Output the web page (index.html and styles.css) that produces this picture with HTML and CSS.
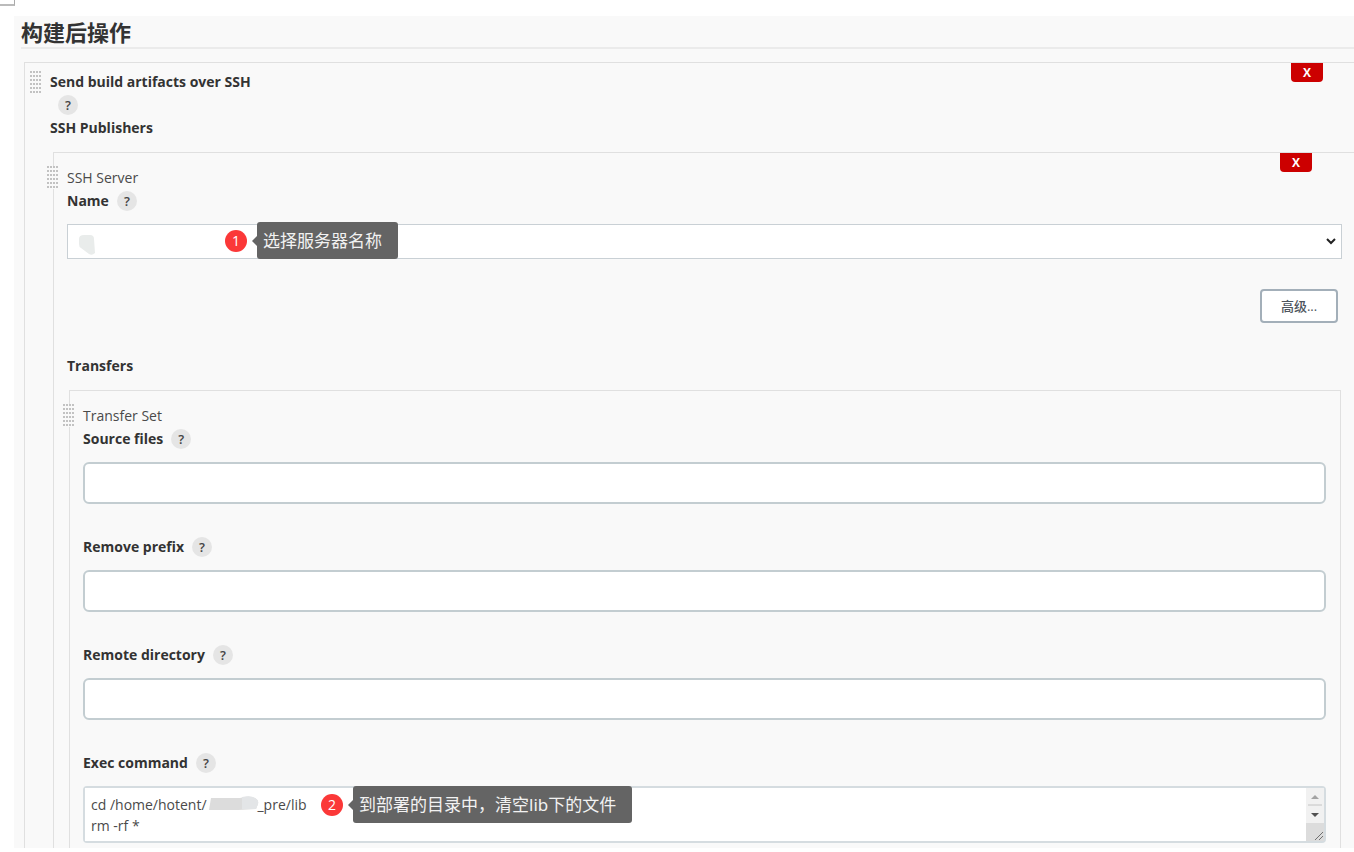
FILE: index.html
```html
<!DOCTYPE html>
<html lang="zh-CN">
<head>
<meta charset="utf-8">
<title>构建后操作</title>
<link rel="stylesheet" href="styles.css">
</head>
<body>
<div class="page-corner"></div>
<main class="config">
  <h1 class="section-title">构建后操作</h1>

  <section class="chunk chunk-publisher">
    <span class="handle"></span>
    <button class="delete" type="button">X</button>
    <div class="row strong">Send build artifacts over SSH</div>
    <div class="row row-help"><button class="help" type="button">?</button></div>
    <div class="row strong">SSH Publishers</div>

    <section class="chunk chunk-server">
      <span class="handle"></span>
      <button class="delete" type="button">X</button>
      <div class="row">SSH Server</div>
      <div class="row strong"><label for="server">Name</label><button class="help" type="button">?</button></div>
      <div class="field field-select">
        <select class="select" id="server"><option></option></select>
        <svg class="chevron" width="10" height="8" viewBox="0 0 10 8"><path d="M1 2l4 4 4-4" fill="none" stroke="#222" stroke-width="2"/></svg>
        <svg class="smudge" width="18" height="22" viewBox="0 0 18 22"><path d="M1 5Q1 1 6 1h6q4 0 4 4l1 14q-3 3-6 1L3 14q-2-1-2-4z" fill="#e9eceb"/></svg>
        <div class="note note-server"><span class="note-number">1</span><span class="note-text">选择服务器名称</span></div>
      </div>
      <div class="actions"><button class="advanced" type="button">高级...</button></div>
      <div class="row strong row-transfers">Transfers</div>

      <section class="chunk chunk-transfer">
        <span class="handle"></span>
        <div class="row">Transfer Set</div>
        <div class="row strong"><label for="source">Source files</label><button class="help" type="button">?</button></div>
        <input class="text-input" id="source" type="text">
        <div class="row strong row-next"><label for="prefix">Remove prefix</label><button class="help" type="button">?</button></div>
        <input class="text-input" id="prefix" type="text">
        <div class="row strong row-next"><label for="directory">Remote directory</label><button class="help" type="button">?</button></div>
        <input class="text-input" id="directory" type="text">
        <div class="row strong row-next"><label for="command">Exec command</label><button class="help" type="button">?</button></div>
        <div class="field field-command">
          <textarea class="command" id="command" rows="2">cd /home/hotent/              _pre/lib
rm -rf *</textarea>
          <svg class="scrollbar" width="18" height="53" viewBox="0 0 18 53"><path d="M0 0h18v35H0z" fill="#f1f1f1"/><path d="M0 35h18v18H0z" fill="#dcdcdc"/><path d="M5 11l4-4 4 4z" fill="#a3a3a3"/><path d="M2 17h14" stroke="#c4c4c4"/><path d="M5 25h8l-4 4z" fill="#505050"/><path d="M9 52l8-8M13 52l4-4" stroke="#707070"/></svg>
          <svg class="mask" width="52" height="18" viewBox="0 0 52 18"><path d="M3 3h29q9-3 15 0 4 2 3 6l-2 5-18 1H1z" fill="#dcdcdc"/><path d="M34 2q9-2 13 1 4 2 3 6l-2 5H34z" fill="#e3e5e7"/></svg>
          <div class="note note-command"><span class="note-number">2</span><span class="note-text">到部署的目录中，清空lib下的文件</span></div>
        </div>
      </section>
    </section>
  </section>
</main>
</body>
</html>
```

FILE: styles.css
```css
* { box-sizing: border-box; }

body {
  margin: 0;
  padding-bottom: 4px;
  background: #fff;
  color: #333;
  font: 14px/23px "Open Sans", "Noto Sans CJK SC", sans-serif;
  overflow-x: hidden;
}

button, input, select, textarea { margin: 0; font: inherit; color: inherit; }

.page-corner {
  width: 15px;
  height: 6px;
  border-right: 1px solid #aaa;
  border-bottom: 2px solid #bbb;
}

.config {
  margin: 10px 0 0 14px;
  padding-left: 7px;
  background: #f9f9f9;
}

.section-title {
  margin: 0 0 13px;
  height: 33px;
  border-bottom: 2px solid #ebebeb;
  font-size: 22px;
  line-height: 32px;
  font-weight: 700;
}

.chunk { position: relative; border: 1px solid #e0e0e0; border-width: 1px 0 0 1px; }
.chunk-publisher { margin-left: 3px; padding: 7px 0 0 25px; }
.chunk-server { margin: 13px 0 0 3px; padding: 13px 12px 0 13px; }
.chunk-transfer { margin: 13px 1px 0 2px; padding: 13px 14px 5px 13px; border-right-width: 1px; }

.row { display: flex; align-items: center; height: 23px; color: #4a4a4a; }
.strong { color: #333; font-weight: 700; }
.row-next, .row-transfers { margin-top: 31px; }

.handle {
  position: absolute;
  top: 13px;
  left: -7px;
  width: 12px;
  height: 23px;
  background-color: #f9f9f9;
  background-image:
    linear-gradient(to right, transparent 2px, #f9f9f9 2px),
    linear-gradient(to bottom, #c2c2c2 2px, transparent 2px);
  background-size: 3px 4px;
}
.chunk-publisher > .handle { top: 8px; left: 5px; }

.delete {
  position: absolute;
  top: 0;
  right: 31px;
  width: 32px;
  height: 19px;
  padding: 0;
  border: 0;
  border-radius: 0 0 4px 4px;
  background: #c00;
  color: #fff;
  font-size: 12px;
  line-height: 19px;
  font-weight: 700;
}
.chunk-server > .delete { right: 42px; }

.help {
  width: 20px;
  height: 20px;
  margin-left: 8px;
  padding: 0;
  border: 0;
  border-radius: 50%;
  background: #e5e5e5;
  color: #444;
  font-size: 13px;
  line-height: 20px;
  font-weight: 600;
}

.field { position: relative; margin-top: 12px; }

.select {
  display: block;
  width: 100%;
  height: 35px;
  padding: 0 24px 0 8px;
  appearance: none;
  border: 1px solid #c9d0d5;
  border-radius: 0;
  background: #fff;
}
.chevron { position: absolute; right: 6px; top: 13px; pointer-events: none; }
.smudge { position: absolute; left: 11px; top: 10px; }

.actions { display: flex; justify-content: flex-end; margin: 30px 4px 0 0; }
.advanced {
  width: 78px;
  height: 34px;
  padding: 0;
  border: 2px solid #a3afb9;
  border-radius: 4px;
  background: #fff;
  font-size: 13px;
  font-weight: 500;
  line-height: 20px;
  color: #4d545d;
}

.text-input {
  display: block;
  width: 100%;
  height: 42px;
  margin-top: 12px;
  padding: 0 8px;
  border: 2px solid #c3cdd1;
  border-radius: 6px;
  background: #fff;
}

.field-command {
  display: flex;
  height: 57px;
  border: 2px solid #d5dce0;
  border-radius: 4px;
  background: #fff;
}
.command {
  flex: 1;
  min-width: 0;
  padding: 6px 6px 0;
  border: 0;
  background: #fff;
  color: #4a4a4a;
  line-height: 21px;
  resize: none;
  overflow: hidden;
}
.scrollbar { flex: none; }
.mask { position: absolute; left: 123px; top: 7px; }

.note { position: absolute; top: -2px; display: flex; align-items: center; gap: 10px; }
.note-server { left: 158px; }
.note-command { left: 236px; }
.note-number {
  width: 22px;
  height: 22px;
  border-radius: 50%;
  background: #fb3838;
  color: #fff;
  font-size: 14px;
  line-height: 22px;
  text-align: center;
}
.note-text {
  position: relative;
  height: 37px;
  padding: 0 16px 0 6px;
  border-radius: 3px;
  background: #646464;
  color: #f2f2f2;
  font-family: "Noto Sans", "Noto Sans CJK SC", sans-serif;
  font-size: 17px;
  line-height: 37px;
  white-space: nowrap;
}
.note-text::before {
  content: "";
  position: absolute;
  left: -5px;
  top: 14px;
  border: 5px solid transparent;
  border-left-width: 0;
  border-right-color: #646464;
}
```
